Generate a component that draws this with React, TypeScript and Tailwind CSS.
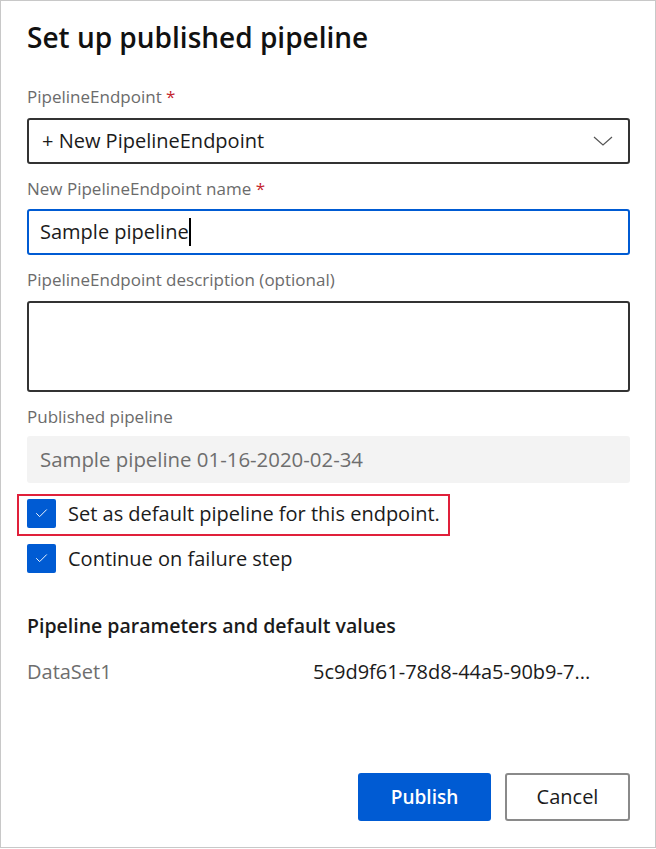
import { Check } from 'lucide-react';

const font = { fontFamily: '"Open Sans", "Noto Sans", sans-serif' };

function Label({ text, required }: { text: string; required?: boolean }) {
  return (
    <div className="text-[17px] leading-[22px] text-[#6b6b6b]">
      {text}
      {required && <span className="text-[#c4262e]"> *</span>}
    </div>
  );
}

function Checkbox({ label }: { label: string }) {
  return (
    <div className="flex items-center gap-[12px] h-[29px]">
      <div className="w-[29px] h-[29px] rounded-[2px] bg-[#005bd3] flex items-center justify-center">
        <Check size={15} strokeWidth={1.5} className="text-white" />
      </div>
      <span className="text-[20px] leading-[26px] text-[#1b1b1b]">{label}</span>
    </div>
  );
}

export default function App() {
  return (
    <div
      style={font}
      className="w-[656px] h-[848px] border border-[#c8c8c8] bg-white pl-[26px] pr-[25px] pt-[18px] pb-[26px] flex flex-col"
    >
      <h1 className="text-[28px] leading-[36px] font-semibold text-[#111]">Set up published pipeline</h1>

      <div className="mt-[31px]">
        <Label text="PipelineEndpoint" required />
      </div>
      <div className="mt-[10px] h-[46px] border-2 border-[#333] rounded-[3px] flex items-center justify-between pl-[13px] pr-[15px]">
        <span className="text-[20px] text-[#1b1b1b]">+ New PipelineEndpoint</span>
        <svg width="20" height="10" viewBox="0 0 20 10" fill="none">
          <polyline points="1,1 10,9 19,1" stroke="#555" strokeWidth="1.2" />
        </svg>
      </div>

      <div className="mt-[14px]">
        <Label text="New PipelineEndpoint name" required />
      </div>
      <div className="mt-[9px] h-[46px] border-2 border-[#005bd3] rounded-[3px] flex items-center pl-[11px]">
        <span className="text-[20px] text-[#1b1b1b]">Sample pipeline</span>
        <span className="w-[2px] h-[28px] bg-black" />
      </div>

      <div className="mt-[14px]">
        <Label text="PipelineEndpoint description (optional)" />
      </div>
      <div className="mt-[10px] h-[91px] border-2 border-[#333] rounded-[3px]" />

      <div className="mt-[14px]">
        <Label text="Published pipeline" />
      </div>
      <div className="mt-[8px] h-[47px] bg-[#f3f3f3] rounded-[3px] flex items-center pl-[13px]">
        <span className="text-[20.4px] text-[#6e6e6e]">Sample pipeline 01-16-2020-02-34</span>
      </div>

      <div className="relative mt-[16px]">
        <div className="absolute left-[-10px] top-[-5px] w-[433px] h-[42px] border-2 border-[#e0203a]" />
        <Checkbox label="Set as default pipeline for this endpoint." />
      </div>
      <div className="mt-[16px]">
        <Checkbox label="Continue on failure step" />
      </div>

      <h2 className="mt-[40px] text-[19.5px] leading-[26px] font-semibold text-[#1b1b1b]">
        Pipeline parameters and default values
      </h2>
      <div className="mt-[20px] flex text-[20px] leading-[25px]">
        <span className="w-[286px] text-[#6e6e6e]">DataSet1</span>
        <span className="text-[#1b1b1b]">5c9d9f61-78d8-44a5-90b9-7...</span>
      </div>

      <div className="mt-auto flex justify-end gap-[14px]">
        <button className="w-[133px] h-[48px] rounded-[3px] bg-[#005bd3] text-white text-[19px] font-semibold">
          Publish
        </button>
        <button className="w-[125px] h-[48px] rounded-[3px] border-2 border-[#8a8a8a] bg-white text-[#1b1b1b] text-[20px]">
          Cancel
        </button>
      </div>
    </div>
  );
}
